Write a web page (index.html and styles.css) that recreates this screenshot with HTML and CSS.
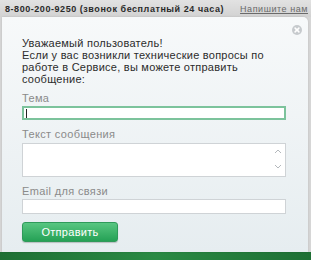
FILE: index.html
```html
<!DOCTYPE html>
<html>
  <head>
    <meta charset="utf-8">
    <title>Напишите нам</title>
    <link rel="stylesheet" href="styles.css">
  </head>
  <body>
    <div class="topbar">
      <span class="phone">8-800-200-9250 (звонок бесплатный 24 часа)</span>
      <a class="write" href="#">Напишите нам</a>
    </div>

    <div class="popup">
      <span class="close">
        <svg width="10" height="10" viewBox="0 0 10 10">
          <circle cx="5" cy="5" r="5" fill="#c6cacd"/>
          <path d="M3.1 3.1 L6.9 6.9 M6.9 3.1 L3.1 6.9" stroke="#fff" stroke-width="1.5" stroke-linecap="round"/>
        </svg>
      </span>

      <form class="feedback">
        <p class="intro">Уважаемый пользователь!<br>Если у вас возникли технические вопросы по работе в Сервисе, вы можете отправить сообщение:</p>

        <label>Тема</label>
        <div class="field focused"><span class="caret"></span></div>

        <label for="message">Текст сообщения</label>
        <div class="area">
          <span class="arrows">
            <svg width="8" height="24" viewBox="0 0 8 24">
              <path d="M1 6 L4 3 L7 6" fill="none" stroke="#b4b8bc" stroke-width="1"/>
              <path d="M1 18 L4 21 L7 18" fill="none" stroke="#b4b8bc" stroke-width="1"/>
            </svg>
          </span>
        </div>

        <label for="email">Email для связи</label>
        <input id="email" class="field" type="text">

        <button class="send" type="button">Отправить</button>
      </form>
    </div>

    <div class="footer"></div>
  </body>
</html>
```

FILE: styles.css
```css
body {
  margin: 0;
  width: 311px;
  height: 260px;
  overflow: hidden;
  background: #d6d6d6;
  font-family: "Liberation Sans", Arial, sans-serif;
}
.topbar {
  height: 17px;
  display: flex;
  justify-content: space-between;
  align-items: center;
  padding: 0 3px 0 5px;
  background: linear-gradient(#e2e2e2, #d2d2d2);
  font-size: 9px;
}
.phone {
  font-weight: bold;
  color: #2a2a2a;
  letter-spacing: 0.55px;
}
.write {
  color: #6a6a6a;
  text-decoration: underline;
  letter-spacing: 0.55px;
}
.popup {
  position: relative;
  margin: 0 3px 0 2px;
  height: 235px;
  border-radius: 0 5px 0 0;
  background: linear-gradient(#f7f9fa, #e6edf0);
  box-shadow: 0 0 2px rgba(0, 0, 0, 0.15);
}
.close {
  position: absolute;
  top: 8px;
  right: 6px;
  line-height: 0;
}
.feedback {
  padding: 20px 20px 0 20px;
  display: flex;
  flex-direction: column;
  align-items: flex-start;
}
.intro {
  margin: 0;
  font-size: 11px;
  line-height: 12px;
  color: #2c2c2c;
  letter-spacing: 0.25px;
}
.feedback label {
  margin-top: 8px;
  font-size: 11px;
  line-height: 13px;
  color: #8a8a8a;
  letter-spacing: 0.35px;
}
.intro + label {
  margin-top: 7px;
}
.field {
  box-sizing: border-box;
  width: 264px;
  height: 15px;
  margin: 1px 0 0;
  padding: 0 3px;
  border: 1px solid #cfd3d6;
  background: #fff;
  outline: none;
}
.focused {
  height: 14px;
  padding: 1px 2px;
  border: 2px solid #7cc39c;
}
.caret {
  display: block;
  width: 1px;
  height: 9px;
  background: #222;
}
.area {
  position: relative;
  box-sizing: border-box;
  width: 264px;
  height: 34px;
  margin-top: 2px;
  border: 1px solid #cfd3d6;
  background: #fff;
}
.arrows {
  position: absolute;
  right: 3px;
  top: 3px;
  line-height: 0;
}
.send {
  margin-top: 8px;
  width: 96px;
  height: 20px;
  border: 1px solid #2f9a5a;
  border-radius: 3px;
  background: linear-gradient(#58c681, #25a155);
  color: #fff;
  font-family: "Liberation Sans", Arial, sans-serif;
  font-size: 11px;
  letter-spacing: 0.3px;
  box-shadow: 0 1px 1px rgba(0, 0, 0, 0.2);
}
.footer {
  height: 8px;
  background: linear-gradient(90deg, #1e6f34, #2a8a44 50%, #1e6f34);
}
```
